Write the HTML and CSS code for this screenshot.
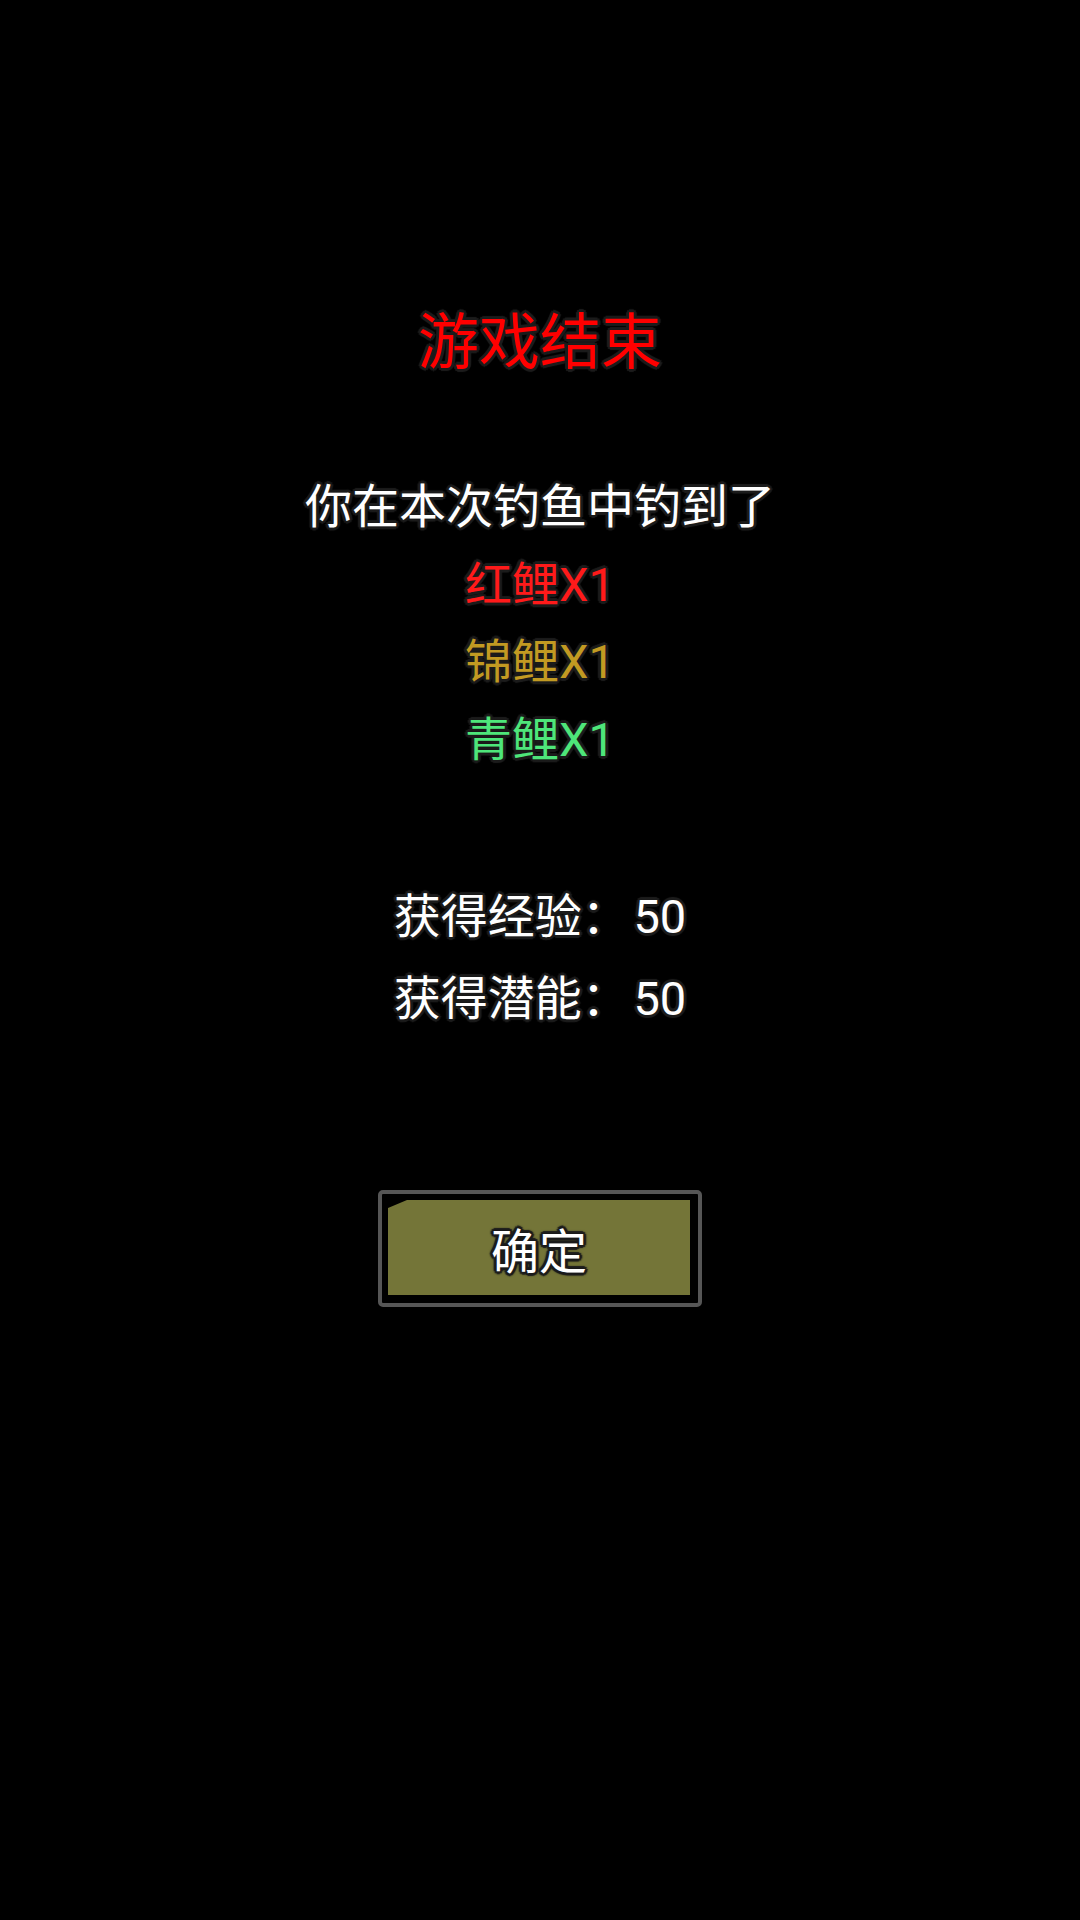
FILE: index.html
```html
<!DOCTYPE html>
<html lang="zh-CN">
<head>
<meta charset="utf-8">
<title>游戏结束</title>
<link rel="stylesheet" href="styles.css">
</head>
<body>
<main class="screen">
  <h1 class="title outlined">游戏结束</h1>
  <section class="catch">
    <p class="line outlined white">你在本次钓鱼中钓到了</p>
    <p class="line outlined red">红鲤X1</p>
    <p class="line outlined gold">锦鲤X1</p>
    <p class="line outlined green">青鲤X1</p>
  </section>
  <section class="stats">
    <p class="stat outlined white">获得经验： 50</p>
    <p class="stat outlined white">获得潜能： 50</p>
  </section>
  <button class="ok">
    <span class="ok-face"><span class="ok-label outlined">确定</span></span>
  </button>
</main>
</body>
</html>
```

FILE: styles.css
```css
html, body {
  margin: 0;
  padding: 0;
  background: #000;
}
body {
  width: 1080px;
  height: 1920px;
  overflow: hidden;
  font-family: Roboto, "Noto Sans CJK SC", sans-serif;
}
.screen {
  display: flex;
  flex-direction: column;
  align-items: center;
  padding-top: 303px;
}
.outlined {
  text-shadow:
    3px 0 1px #1c1c1c, -3px 0 1px #1c1c1c, 0 3px 1px #1c1c1c, 0 -3px 1px #1c1c1c,
    2px 2px 1px #1c1c1c, -2px 2px 1px #1c1c1c, 2px -2px 1px #1c1c1c, -2px -2px 1px #1c1c1c,
    0 0 4px #1c1c1c;
}
.title {
  margin: 0;
  font-size: 61px;
  line-height: 80px;
  font-weight: 400;
  color: #ff0000;
}
.catch {
  margin-top: 85px;
  display: flex;
  flex-direction: column;
  align-items: center;
}
.line {
  margin: 0;
  font-size: 47px;
  line-height: 77.5px;
}
.white { color: #ffffff; }
.red { color: #ff1a1a; }
.gold { color: #c29a22; }
.green { color: #4ee67a; }
.stats {
  margin-top: 98px;
  display: flex;
  flex-direction: column;
  align-items: center;
}
.stat {
  margin: 0;
  font-size: 47px;
  line-height: 82px;
  word-spacing: -7px;
}
.ok {
  margin-top: 150px;
  width: 324px;
  height: 117px;
  box-sizing: border-box;
  border: 4px solid #565656;
  border-radius: 5px;
  background: #000;
  padding: 6px 8px 8px 6px;
  display: flex;
  cursor: pointer;
}
.ok-face {
  flex: 1;
  background: #747538;
  clip-path: polygon(0 8px, 19px 0, 100% 0, 100% 100%, 0 100%);
  display: flex;
  align-items: center;
  justify-content: center;
}
.ok-label {
  font-family: "Noto Sans CJK SC", sans-serif;
  font-size: 48px;
  line-height: 60px;
  color: #fff;
}
```
